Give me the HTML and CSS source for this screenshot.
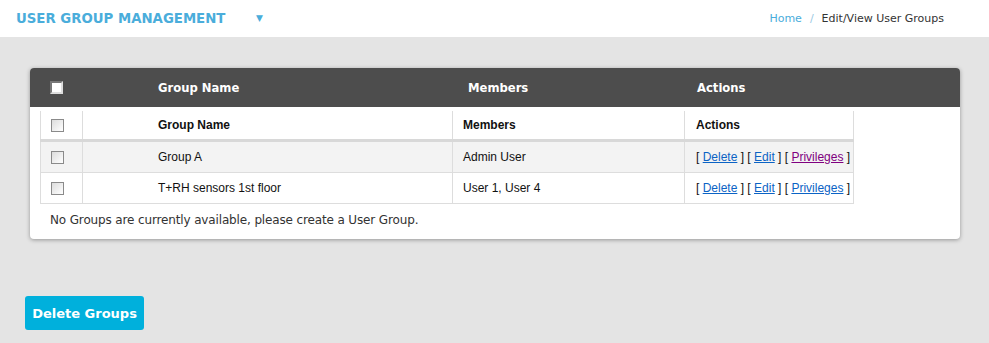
FILE: index.html
```html
<!DOCTYPE html>
<html lang="en">
<head>
    <meta charset="UTF-8" />
    <title>Edit/View User Groups</title>
    <link rel="stylesheet" href="styles.css">
</head>
<body>
<header class="topbar">
    <div class="page-title">
        USER GROUP MANAGEMENT
        <span class="caret">&#9660;</span>
    </div>
    <nav class="crumbs">
        <a href="#">Home</a>
        <span class="sep">/</span>
        <span class="current">Edit/View User Groups</span>
    </nav>
</header>

<main class="content">
    <section class="panel">
        <div class="panel-head">
            <span><input type="checkbox" class="chk chk-head"></span>
            <span>Group Name</span>
            <span>Members</span>
            <span>Actions</span>
        </div>

        <table class="groups">
            <thead>
                <tr>
                    <th class="c-chk"><input type="checkbox" class="chk"></th>
                    <th class="c-name">Group Name</th>
                    <th class="c-members">Members</th>
                    <th class="c-actions">Actions</th>
                </tr>
            </thead>
            <tbody>
                <tr class="odd">
                    <td class="c-chk"><input type="checkbox" class="chk"></td>
                    <td class="c-name">Group A</td>
                    <td class="c-members">Admin User</td>
                    <td class="c-actions">[ <a href="#">Delete</a> ] [ <a href="#">Edit</a> ] [ <a href="#" class="visited">Privileges</a> ]</td>
                </tr>
                <tr>
                    <td class="c-chk"><input type="checkbox" class="chk"></td>
                    <td class="c-name">T+RH sensors 1st floor</td>
                    <td class="c-members">User 1, User 4</td>
                    <td class="c-actions">[ <a href="#">Delete</a> ] [ <a href="#">Edit</a> ] [ <a href="#">Privileges</a> ]</td>
                </tr>
            </tbody>
        </table>

        <p class="empty-note">No Groups are currently available, please create a User Group.</p>
    </section>

    <button type="button" class="btn-delete">Delete Groups</button>
</main>
</body>
</html>
```

FILE: styles.css
```css
body {
    margin: 0;
    background: #e4e4e4;
    font-family: "DejaVu Sans", sans-serif;
    color: #333;
}
.topbar {
    background: #fff;
    height: 37px;
    display: flex;
    align-items: center;
    justify-content: space-between;
    padding: 0 45px 0 16px;
}
.page-title {
    color: #4aaddb;
    font-weight: bold;
    font-size: 13.3px;
}
.caret {
    font-size: 9px;
    margin-left: 26px;
    vertical-align: 2px;
}
.crumbs {
    font-size: 11px;
    display: flex;
    gap: 8px;
}
.crumbs a {
    color: #4aaddb;
    text-decoration: none;
}
.crumbs .sep {
    color: #9bc9e3;
}
.crumbs .current {
    color: #333;
}
.content {
    padding: 31px 29px 0 25px;
}
.panel {
    background: #fff;
    margin-left: 5px;
    border-radius: 4px;
    box-shadow: 0 1px 4px rgba(0,0,0,0.35);
    padding-bottom: 11px;
}
.panel-head {
    background: #4d4d4d;
    border-radius: 4px 4px 0 0;
    height: 39px;
    display: grid;
    grid-template-columns: 108px 310px 229px 1fr;
    align-items: center;
    padding-left: 20px;
    color: #fff;
    font-weight: bold;
    font-size: 11.6px;
}
.chk {
    appearance: none;
    -webkit-appearance: none;
    display: block;
    margin: 0;
    width: 13px;
    height: 13px;
    border: 1px solid #8a8a8a;
    background: linear-gradient(135deg, #dcdcdc, #fff);
    box-sizing: border-box;
}
.chk-head {
    background: #fff;
    border: 2px solid #777;
    border-right-color: #ddd;
    border-bottom-color: #ddd;
}
.groups {
    border-collapse: collapse;
    margin: 4px 0 0 10px;
    width: 814px;
    font-family: "Liberation Sans", Arial, sans-serif;
    font-size: 12px;
    color: #111;
}
.groups th,
.groups td {
    border-left: 1px solid #ddd;
    border-right: 1px solid #ddd;
    text-align: left;
    padding: 0;
}
.groups th {
    height: 28px;
    border-bottom: 3px solid #d8d8d8;
    font-weight: bold;
}
.groups td {
    height: 30px;
    border-bottom: 1px solid #ddd;
}
.groups tr.odd td {
    background: #f3f3f3;
}
.c-chk {
    width: 41px;
}
.c-chk .chk {
    margin-left: 10px;
}
.c-name {
    width: 294px;
    padding-left: 75px !important;
}
.c-members {
    width: 221px;
    padding-left: 10px !important;
}
.c-actions {
    padding-left: 11px !important;
}
.c-actions a {
    color: #0b63c5;
}
.c-actions a.visited {
    color: #800080;
}
.empty-note {
    margin: 8px 0 0 20px;
    font-size: 12px;
    line-height: 16px;
    letter-spacing: -0.14px;
    color: #333;
}
.btn-delete {
    margin-top: 57px;
    background: #00b0dc;
    color: #fff;
    border: none;
    border-radius: 3px;
    height: 34px;
    width: 119px;
    font-family: "DejaVu Sans", sans-serif;
    font-weight: bold;
    font-size: 13px;
    cursor: pointer;
}
```
